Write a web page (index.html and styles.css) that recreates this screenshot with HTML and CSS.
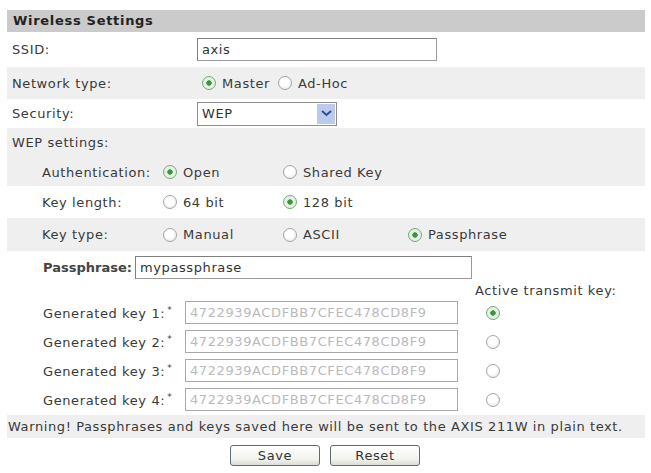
FILE: index.html
```html
<!DOCTYPE html>
<html lang="en">
<head>
    <meta charset="UTF-8">
    <title>Wireless Settings</title>
    <link rel="stylesheet" href="styles.css">
</head>
<body>
    <form class="panel">
        <div class="panel-title">Wireless Settings</div>

        <!-- Basic settings -->
        <div class="row row-ssid">
            <label class="label" for="ssid">SSID:</label>
            <input type="text" id="ssid" class="text-input ssid-input" value="axis">
        </div>

        <div class="row row-net shaded">
            <span class="label">Network type:</span>
            <label class="choice"><input type="radio" name="net" checked>Master</label>
            <label class="choice"><input type="radio" name="net">Ad-Hoc</label>
        </div>

        <div class="row row-sec">
            <label class="label" for="security">Security:</label>
            <div class="select-wrap">
                <select id="security" class="select">
                    <option>WEP</option>
                    <option>WPA-PSK</option>
                    <option>None</option>
                </select>
                <span class="select-arrow">
                    <svg width="11" height="7" viewBox="0 0 11 7"><path d="M1 1 L5.5 5 L10 1" fill="none" stroke="#2d4f9a" stroke-width="2"/></svg>
                </span>
            </div>
        </div>

        <!-- WEP settings -->
        <div class="wep-block shaded">
            <div class="wep-title">WEP settings:</div>
            <div class="sub-row sub-auth">
                <span class="sub-label">Authentication:</span>
                <label class="choice"><input type="radio" name="auth" checked>Open</label>
                <label class="choice"><input type="radio" name="auth">Shared Key</label>
            </div>
        </div>

        <div class="sub-row sub-len">
            <span class="sub-label">Key length:</span>
            <label class="choice"><input type="radio" name="len">64 bit</label>
            <label class="choice"><input type="radio" name="len" checked>128 bit</label>
        </div>

        <div class="sub-row sub-type shaded">
            <span class="sub-label">Key type:</span>
            <label class="choice"><input type="radio" name="ktype">Manual</label>
            <label class="choice"><input type="radio" name="ktype">ASCII</label>
            <label class="choice"><input type="radio" name="ktype" checked>Passphrase</label>
        </div>

        <div class="pass-row">
            <label class="pass-label" for="pass">Passphrase:</label>
            <input type="text" id="pass" class="text-input pass-input" value="mypassphrase">
        </div>

        <div class="transmit-head">Active transmit key:</div>

        <div class="key-row">
            <span class="key-label">Generated key 1:<sup>*</sup></span>
            <input type="text" class="text-input key-input" value="4722939ACDFBB7CFEC478CD8F9" readonly>
            <input type="radio" name="active" class="key-radio" checked>
        </div>
        <div class="key-row">
            <span class="key-label">Generated key 2:<sup>*</sup></span>
            <input type="text" class="text-input key-input" value="4722939ACDFBB7CFEC478CD8F9" readonly>
            <input type="radio" name="active" class="key-radio">
        </div>
        <div class="key-row">
            <span class="key-label">Generated key 3:<sup>*</sup></span>
            <input type="text" class="text-input key-input" value="4722939ACDFBB7CFEC478CD8F9" readonly>
            <input type="radio" name="active" class="key-radio">
        </div>
        <div class="key-row">
            <span class="key-label">Generated key 4:<sup>*</sup></span>
            <input type="text" class="text-input key-input" value="4722939ACDFBB7CFEC478CD8F9" readonly>
            <input type="radio" name="active" class="key-radio">
        </div>

        <div class="warning shaded">Warning! Passphrases and keys saved here will be sent to the AXIS 211W in plain text.</div>

        <div class="buttons">
            <button type="button" class="btn">Save</button>
            <button type="reset" class="btn">Reset</button>
        </div>
    </form>
</body>
</html>
```

FILE: styles.css
```css
body {
    margin: 0;
    background: #fff;
    font-family: "DejaVu Sans", Verdana, sans-serif;
    font-size: 13px;
    letter-spacing: 0.6px;
    color: #3a3a3a;
}

.panel {
    width: 638px;
    margin: 10px 0 0 7px;
}

.panel-title {
    height: 22px;
    line-height: 22px;
    padding-left: 6px;
    background: #cbcbcb;
    font-size: 13px;
    font-weight: bold;
    letter-spacing: 0.7px;
    color: #222;
}

.shaded {
    background: #efefef;
}

.row {
    display: flex;
    align-items: center;
}

.label {
    width: 185px;
    padding-left: 5px;
    flex: none;
}

.row-ssid { height: 35px; }
.row-net  { height: 32px; }
.row-sec  { height: 29px; }

.text-input {
    box-sizing: border-box;
    height: 23px;
    margin: 0;
    padding: 0 4px;
    border: 1px solid #9a9a9a;
    border-top-color: #7f7f7f;
    border-left-color: #7f7f7f;
    font-family: inherit;
    font-size: 13px;
    letter-spacing: 0.6px;
    color: #333;
    background: #fff;
}

.ssid-input {
    width: 240px;
}

.choice {
    display: inline-flex;
    align-items: center;
    margin-right: 8px;
}

.row-net .choice:first-of-type {
    margin-left: 5px;
}

input[type="radio"] {
    appearance: none;
    -webkit-appearance: none;
    box-sizing: border-box;
    width: 14px;
    height: 14px;
    margin: 0 6px 0 0;
    border: 1px solid #9fa6ab;
    border-radius: 50%;
    background: radial-gradient(circle at 45% 40%, #fff 40%, #e0e0e0 100%);
    flex: none;
}

input[type="radio"]:checked {
    border-color: #74ad74;
    background: radial-gradient(circle, #3d963d 0 2.4px, #e4f1e4 3px);
}

/* select with XP style arrow */
.select-wrap {
    position: relative;
    width: 140px;
    height: 24px;
}

.select {
    appearance: none;
    -webkit-appearance: none;
    box-sizing: border-box;
    width: 100%;
    height: 100%;
    margin: 0;
    padding: 0 4px;
    border: 1px solid #8e8e8e;
    border-radius: 0;
    background: #fff;
    font-family: inherit;
    font-size: 13px;
    letter-spacing: 0.6px;
    color: #333;
}

.select-arrow {
    position: absolute;
    top: 2px;
    right: 2px;
    bottom: 2px;
    width: 18px;
    display: flex;
    align-items: center;
    justify-content: center;
    background: #bccbeb;
    pointer-events: none;
}

/* WEP section */
.wep-block {
    height: 58px;
}

.wep-title {
    height: 30px;
    line-height: 30px;
    padding-left: 5px;
}

.sub-row {
    display: grid;
    grid-template-columns: 121px 120px 125px auto;
    align-items: center;
    padding-left: 35px;
}

.sub-auth { height: 28px; }
.sub-len  { height: 32px; }
.sub-type { height: 33px; }

.pass-row {
    display: flex;
    align-items: center;
    height: 33px;
    padding-left: 36px;
}

.pass-label {
    width: 92px;
    font-weight: bold;
    letter-spacing: 0;
    color: #444;
}

.pass-input {
    width: 337px;
}

.transmit-head {
    height: 14px;
    line-height: 14px;
    padding-left: 468px;
}

.key-row {
    display: flex;
    align-items: center;
    height: 29px;
    padding-left: 36px;
}

.key-label {
    width: 142px;
    flex: none;
    white-space: nowrap;
}

.key-label sup {
    font-size: 9px;
    vertical-align: 5px;
    margin-left: 2px;
}

.key-input {
    width: 273px;
    color: #bababa;
    border-color: #a8a8a8;
}

.key-radio {
    margin-left: 28px !important;
}

.warning {
    height: 23px;
    line-height: 23px;
    margin-top: 1px;
    padding-left: 1px;
    white-space: nowrap;
}

.buttons {
    display: flex;
    gap: 10px;
    padding: 7px 0 0 223px;
}

.btn {
    width: 90px;
    height: 21px;
    padding: 0;
    border: 1px solid #5f6b73;
    border-radius: 3px;
    background: linear-gradient(#ffffff, #f2f2ee 70%, #dcdcd4);
    font-family: inherit;
    font-size: 13px;
    letter-spacing: 0.6px;
    color: #333;
}
```
